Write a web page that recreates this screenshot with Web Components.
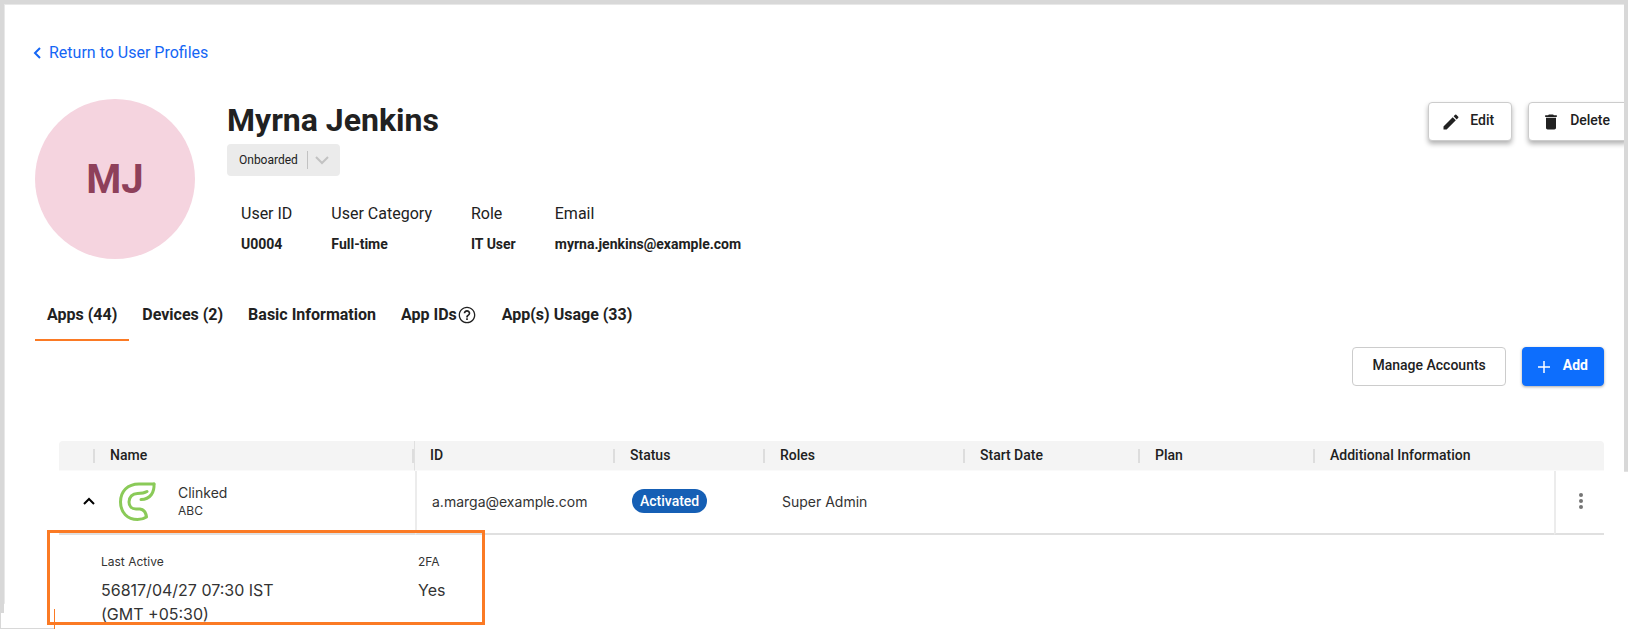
<!DOCTYPE html>
<html lang="en">
<head>
<meta charset="utf-8">
<meta name="viewport" content="width=device-width, initial-scale=1">
<title>Myrna Jenkins - User Profile</title>
<style>
    body {
        margin: 0;
        font-family: Roboto, "Liberation Sans", sans-serif;
        color: #212121;
        background: #fff;
    }
</style>
</head>
<body>
<profile-page>
    <return-link slot="nav" href="#profiles">Return to User Profiles</return-link>

    <user-header slot="header" initials="MJ" name="Myrna Jenkins">
        <status-select slot="status" value="Onboarded"></status-select>
        <info-field slot="info" label="User ID">U0004</info-field>
        <info-field slot="info" label="User Category">Full-time</info-field>
        <info-field slot="info" label="Role">IT User</info-field>
        <info-field slot="info" label="Email">myrna.jenkins@example.com</info-field>
        <action-button slot="actions" icon="edit" variant="raised">Edit</action-button>
        <action-button slot="actions" icon="delete" variant="raised">Delete</action-button>
    </user-header>

    <tab-bar slot="tabs">
        <tab-item selected>Apps (44)</tab-item>
        <tab-item>Devices (2)</tab-item>
        <tab-item>Basic Information</tab-item>
        <tab-item help>App IDs</tab-item>
        <tab-item>App(s) Usage (33)</tab-item>
    </tab-bar>

    <action-button slot="toolbar">Manage Accounts</action-button>
    <action-button slot="toolbar" icon="add" variant="primary">Add</action-button>

    <apps-table></apps-table>
    <account-details></account-details>
</profile-page>

<script>
const ICONS = {
    edit: '<svg width="20" height="20" viewBox="0 0 24 24" fill="currentColor"><path d="M3 17.25V21h3.75L17.8 9.94l-3.75-3.75L3 17.25zM20.7 7.04a1 1 0 0 0 0-1.41l-2.34-2.34a1 1 0 0 0-1.41 0l-1.83 1.83 3.75 3.75 1.83-1.83z"/></svg>',
    delete: '<svg width="20" height="20" viewBox="0 0 24 24" fill="currentColor"><path d="M6 19c0 1.1.9 2 2 2h8c1.1 0 2-.9 2-2V7H6v12zM19 4h-3.5l-1-1h-5l-1 1H5v2h14V4z"/></svg>',
    add: '<svg width="20" height="20" viewBox="0 0 20 20" stroke="currentColor" stroke-width="1.5" fill="none"><path d="M4 10h12M10 4v12"/></svg>',
    help: '<svg width="20" height="20" viewBox="0 0 24 24" fill="currentColor"><path d="M11 18h2v-2h-2v2zm1-16C6.48 2 2 6.48 2 12s4.480 10 10 10 10-4.480 10-10S17.520 2 12 2zm0 18.400c-4.600 0-8.400-3.800-8.400-8.400S7.400 3.600 12 3.600s8.400 3.800 8.400 8.400-3.800 8.400-8.400 8.400zM12 6c-2.210 0-4 1.790-4 4h2c0-1.100.9-2 2-2s2 .9 2 2c0 2-3 1.750-3 5h2c0-2.250 3-2.500 3-5 0-2.210-1.790-4-4-4z"/></svg>'
};

class ProfilePage extends HTMLElement {
    connectedCallback() {
        this.attachShadow({ mode: 'open' });
        this.shadowRoot.innerHTML = `
            <style>
                :host {
                    --edge: #d8d8d8;
                    --accent: #fb7a24;
                    display: block;
                    box-sizing: border-box;
                    min-height: 100vh;
                    padding: 5px 4px 4px 5px;
                    /* window edges, then the small corner piece at the bottom left */
                    background:
                        linear-gradient(var(--accent), var(--accent)) 54px 100% / 1px 20px no-repeat,
                        linear-gradient(var(--edge), var(--edge)) 0 100% / 55px 1px no-repeat,
                        linear-gradient(var(--edge), var(--edge)) 0 100% / 1px 16px no-repeat,
                        linear-gradient(#fff, #fff) 0 100% / 55px 16px no-repeat,
                        linear-gradient(var(--edge), var(--edge)) 0 0 / 100% 4px no-repeat,
                        linear-gradient(var(--edge), var(--edge)) 0 0 / 4px 100% no-repeat,
                        linear-gradient(var(--edge), var(--edge)) 100% 0 / 4px 75% no-repeat,
                        linear-gradient(#e8e8e8, #e8e8e8) 0 4px / 100% 1px no-repeat,
                        linear-gradient(#e8e8e8, #e8e8e8) 4px 0 / 1px 96% no-repeat;
                }

                main {
                    display: flex;
                    flex-direction: column;
                    padding: 36px 20px 0 30px;
                    overflow: hidden;
                }

                .header {
                    margin-top: 34px;
                }

                .tabs {
                    margin-top: 32px;
                }

                .toolbar {
                    display: flex;
                    justify-content: flex-end;
                    gap: 16px;
                    margin-top: 6px;
                }

                .content {
                    margin-top: 55px;
                    padding-left: 24px;
                }
            </style>
            <main>
                <nav><slot name="nav"></slot></nav>
                <div class="header"><slot name="header"></slot></div>
                <div class="tabs"><slot name="tabs"></slot></div>
                <div class="toolbar"><slot name="toolbar"></slot></div>
                <div class="content"><slot></slot></div>
            </main>
        `;
    }
}

class ReturnLink extends HTMLElement {
    connectedCallback() {
        this.attachShadow({ mode: 'open' });
        this.shadowRoot.innerHTML = `
            <style>
                :host {
                    display: flex;
                }

                a {
                    display: inline-flex;
                    align-items: center;
                    gap: 8px;
                    font-size: 16px;
                    line-height: 24px;
                    color: #1466f5;
                    text-decoration: none;
                }
            </style>
            <a href="${this.getAttribute('href')}">
                <svg width="6" height="12" viewBox="0 0 6 12" fill="none" stroke="currentColor" stroke-width="2" overflow="visible"><path d="M5 1L0 6l5 5"/></svg>
                <slot></slot>
            </a>
        `;
    }
}

class UserHeader extends HTMLElement {
    connectedCallback() {
        this.attachShadow({ mode: 'open' });
        this.shadowRoot.innerHTML = `
            <style>
                :host {
                    display: flex;
                    align-items: flex-start;
                    gap: 32px;
                }

                .avatar {
                    display: grid;
                    place-items: center;
                    flex: none;
                    width: 160px;
                    height: 160px;
                    border-radius: 50%;
                    background: #f5d4df;
                    color: #8e405a;
                    font-size: 40px;
                    font-weight: 700;
                }

                .identity {
                    flex: 1;
                    min-width: 0;
                }

                h1 {
                    margin: 0 0 4px;
                    padding-top: 1px;
                    font-size: 32px;
                    line-height: 40px;
                    font-weight: 700;
                }

                .info {
                    display: flex;
                    gap: 39px;
                    margin: 26px 0 0 14px;
                }

                /* the buttons run on past the content's right padding */
                .actions {
                    display: flex;
                    gap: 16px;
                    margin: 3px -24px 0 0;
                }
            </style>
            <div class="avatar">${this.getAttribute('initials')}</div>
            <div class="identity">
                <h1>${this.getAttribute('name')}</h1>
                <slot name="status"></slot>
                <div class="info"><slot name="info"></slot></div>
            </div>
            <div class="actions"><slot name="actions"></slot></div>
        `;
    }
}

class StatusSelect extends HTMLElement {
    connectedCallback() {
        this.attachShadow({ mode: 'open' });
        this.shadowRoot.innerHTML = `
            <style>
                :host {
                    display: grid;
                    width: 113px;
                    height: 32px;
                }

                select,
                svg {
                    grid-area: 1 / 1;
                }

                select {
                    appearance: none;
                    border: 0;
                    border-radius: 4px;
                    padding: 0 38px 0 12px;
                    background: #ebebeb;
                    color: inherit;
                    font: 400 12px Roboto, sans-serif;
                }

                svg {
                    place-self: center end;
                    pointer-events: none;
                }
            </style>
            <select aria-label="Status">
                <option>${this.getAttribute('value')}</option>
                <option>Offboarded</option>
            </select>
            <svg width="34" height="20" viewBox="0 0 34 20" fill="none" stroke="#c2c2c2">
                <path d="M1.500 1v18"/>
                <path d="M10 7l6 6 6-6" stroke-width="2"/>
            </svg>
        `;
    }
}

class InfoField extends HTMLElement {
    connectedCallback() {
        this.attachShadow({ mode: 'open' });
        this.shadowRoot.innerHTML = `
            <style>
                :host {
                    display: flex;
                    flex-direction: column;
                    gap: 8px;
                }

                .label {
                    font-size: 16px;
                    line-height: 24px;
                }

                .value {
                    font-size: 14px;
                    font-weight: 700;
                    line-height: 20px;
                }
            </style>
            <span class="label">${this.getAttribute('label')}</span>
            <span class="value"><slot></slot></span>
        `;
    }
}

class ActionButton extends HTMLElement {
    connectedCallback() {
        const icon = ICONS[this.getAttribute('icon')] || '';

        this.attachShadow({ mode: 'open' });
        this.shadowRoot.innerHTML = `
            <style>
                :host {
                    display: block;
                    flex: none;
                }

                button {
                    display: flex;
                    align-items: center;
                    gap: 9px;
                    height: 39px;
                    padding: 0 19px;
                    border: 1px solid #ccc;
                    border-radius: 4px;
                    background: #fff;
                    color: inherit;
                    font: 500 14px Roboto, sans-serif;
                    white-space: nowrap;
                }

                span {
                    padding-bottom: 3px;
                }

                svg {
                    display: block;
                }

                :host([variant="raised"]) button {
                    padding: 0 17px 0 12px;
                    box-shadow: 0 3px 5px rgba(0, 0, 0, 0.3);
                }

                :host([variant="primary"]) button {
                    border-color: #0d6efd;
                    padding: 0 15px 0 11px;
                    background: #0d6efd;
                    color: #fff;
                    font-weight: 700;
                    box-shadow: 0 1px 3px rgba(0, 0, 0, 0.35);
                }
            </style>
            <button type="button">${icon}<span><slot></slot></span></button>
        `;
    }
}

class TabBar extends HTMLElement {
    connectedCallback() {
        this.attachShadow({ mode: 'open' });
        this.shadowRoot.innerHTML = `
            <style>
                :host {
                    display: flex;
                    gap: 1px;
                }
            </style>
            <slot></slot>
        `;
        this.setAttribute('role', 'tablist');
    }
}

class TabItem extends HTMLElement {
    connectedCallback() {
        const selected = this.hasAttribute('selected');

        this.attachShadow({ mode: 'open' });
        this.shadowRoot.innerHTML = `
            <style>
                :host {
                    display: block;
                }

                button {
                    display: flex;
                    align-items: center;
                    padding: 12px;
                    border: 0;
                    border-bottom: 2px solid transparent;
                    background: none;
                    color: inherit;
                    font: 700 16px/24px Roboto, sans-serif;
                    white-space: nowrap;
                }

                :host([selected]) button {
                    border-color: var(--accent);
                }
            </style>
            <button type="button" role="tab" aria-selected="${selected}"><slot></slot>${this.hasAttribute('help') ? ICONS.help : ''}</button>
        `;
    }
}

class AppsTable extends HTMLElement {
    connectedCallback() {
        this.attachShadow({ mode: 'open' });
        this.shadowRoot.innerHTML = `
            <style>
                :host {
                    display: block;
                }

                table {
                    width: 100%;
                    table-layout: fixed;
                    border-collapse: separate;
                    border-spacing: 0;
                }

                .w-toggle { width: 36px; }
                .w-name { width: 320px; }
                .w-wide { width: 200px; }
                .w-status { width: 150px; }
                .w-date { width: 175px; }
                .w-menu { width: 50px; }

                th {
                    height: 27px;
                    padding: 0 0 2px 15px;
                    background: #f4f4f4 linear-gradient(#ddd, #ddd) 100% 50% / 2px 14px no-repeat;
                    border-bottom: 1px solid #fafafa;
                    font-size: 14px;
                    font-weight: 500;
                    line-height: 20px;
                    text-align: left;
                }

                th:first-child {
                    border-top-left-radius: 4px;
                }

                th:nth-child(2) {
                    border-right: 1px solid #e0e0e0;
                }

                th:nth-last-child(-n+2) {
                    background-image: none;
                }

                th:last-child {
                    border-top-right-radius: 4px;
                }

                td {
                    height: 60px;
                    padding: 0 0 2px 17px;
                    border-bottom: 2px solid #e0e0e0;
                    font-family: Inter, sans-serif;
                    font-size: 14px;
                    color: #333;
                }

                td.pinned + td {
                    padding-left: 15px;
                    border-left: 2px solid #ececec;
                }

                td.pinned + td:last-child {
                    padding-left: 17px;
                }

                button {
                    display: block;
                    padding: 0;
                    border: 0;
                    background: none;
                    color: #000;
                }

                td.toggle {
                    padding-left: 24px;
                }

                .app {
                    display: flex;
                    align-items: center;
                    gap: 20px;
                    padding-left: 6px;
                }

                .app-text {
                    display: flex;
                    flex-direction: column;
                    line-height: 20px;
                }

                small {
                    font-size: 12px;
                    line-height: 16px;
                }

                .chip {
                    display: inline-block;
                    padding: 0 8px;
                    border-radius: 12px;
                    background: #155fb5;
                    color: #fff;
                    font: 500 14px/24px Roboto, sans-serif;
                }

                svg {
                    display: block;
                }
            </style>
            <table>
                <colgroup>
                    <col class="w-toggle"><col class="w-name"><col class="w-wide"><col class="w-status">
                    <col class="w-wide"><col class="w-date"><col class="w-date"><col><col class="w-menu">
                </colgroup>
                <thead>
                    <tr>
                        <th></th><th>Name</th><th>ID</th><th>Status</th><th>Roles</th>
                        <th>Start Date</th><th>Plan</th><th>Additional Information</th><th></th>
                    </tr>
                </thead>
                <tbody>
                    <tr>
                        <td class="toggle">
                            <button type="button" aria-label="Collapse row" aria-expanded="true">
                                <svg width="12" height="8" viewBox="0 0 12 8" fill="none" stroke="currentColor" stroke-width="2"><path d="M1 7l5-5 5 5"/></svg>
                            </button>
                        </td>
                        <td class="pinned">
                            <div class="app">
                                <svg width="40" height="40" viewBox="0 0 40 40" fill="none" stroke="#8aca58" stroke-width="3" stroke-linejoin="round" stroke-linecap="round">
                                    <path d="M36 3H21C9.500 3 2.500 10.500 2.500 21S9.500 38.500 19.500 38.500c3.500 0 6.500-.8 9-2.500-.5-4-2.500-7.500-6.500-8H18c-4.500 0-7-3-7-7 0-5 3.500-8.500 8.500-8.500 4 0 7-.5 9.500-2"/>
                                    <path d="M36 3c.5 8-3.500 15.500-13 15.500"/>
                                </svg>
                                <div class="app-text">Clinked<small>ABC</small></div>
                            </div>
                        </td>
                        <td>a.marga@example.com</td>
                        <td><span class="chip">Activated</span></td>
                        <td>Super Admin</td>
                        <td></td>
                        <td></td>
                        <td class="pinned"></td>
                        <td>
                            <button type="button" aria-label="More actions">
                                <svg width="16" height="20" viewBox="0 0 16 20" fill="#757575"><circle cx="8" cy="4" r="2"/><circle cx="8" cy="10" r="2"/><circle cx="8" cy="16" r="2"/></svg>
                            </button>
                        </td>
                    </tr>
                </tbody>
            </table>
        `;
    }
}

class AccountDetails extends HTMLElement {
    connectedCallback() {
        this.attachShadow({ mode: 'open' });
        this.shadowRoot.innerHTML = `
            <style>
                /* the highlight frame sits just over the row's bottom rule */
                :host {
                    display: block;
                    box-sizing: border-box;
                    width: 438px;
                    margin: -5px 0 0 -12px;
                    padding: 19px 0 0 51px;
                    border: 3px solid var(--accent);
                    font-family: Inter, sans-serif;
                    color: #333;
                }

                dl {
                    display: grid;
                    grid-template-columns: 190px 1fr;
                    column-gap: 127px;
                    margin: 0 0 -4px;
                }

                dt {
                    margin-bottom: 6px;
                    font-size: 12px;
                    line-height: 20px;
                }

                dd {
                    margin: 0;
                    font-size: 16px;
                    line-height: 24px;
                }
            </style>
            <dl>
                <div>
                    <dt>Last Active</dt>
                    <dd>56817/04/27 07:30 IST (GMT +05:30)</dd>
                </div>
                <div>
                    <dt>2FA</dt>
                    <dd>Yes</dd>
                </div>
            </dl>
        `;
    }
}

customElements.define('profile-page', ProfilePage);
customElements.define('return-link', ReturnLink);
customElements.define('user-header', UserHeader);
customElements.define('status-select', StatusSelect);
customElements.define('info-field', InfoField);
customElements.define('action-button', ActionButton);
customElements.define('tab-bar', TabBar);
customElements.define('tab-item', TabItem);
customElements.define('apps-table', AppsTable);
customElements.define('account-details', AccountDetails);
</script>
</body>
</html>
